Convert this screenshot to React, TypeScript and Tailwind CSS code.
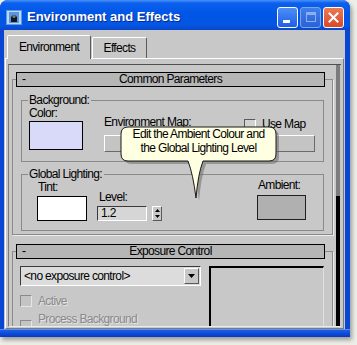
import React from 'react';

const UI = "font-['Liberation_Sans',Arial,sans-serif] text-[12px] tracking-[-0.65px] leading-[13px] text-black";

function Check({ disabled }: { disabled?: boolean }) {
  return (
    <span
      className={`block w-[12px] h-[12px] shrink-0 border ${
        disabled
          ? 'border-t-[#8a8a8a] border-l-[#8a8a8a] border-r-[#e6e6e6] border-b-[#e6e6e6] bg-[#c4c4c4]'
          : 'border-t-[#5a5a5a] border-l-[#5a5a5a] border-r-white border-b-white bg-[#d2d2d2]'
      }`}
    />
  );
}

function RolloutHeader({ title }: { title: string }) {
  return (
    <legend className="ml-[3px] w-[309px] h-[15px] p-0">
      <div className="h-full border border-black bg-[#b6b6b6] flex items-center">
        <span className="w-[16px] pl-[5px]">-</span>
        <span className="flex-1 text-center">{title}</span>
        <span className="w-[16px]" />
      </div>
    </legend>
  );
}

function Group({ label, className, children }: { label: string; className?: string; children: React.ReactNode }) {
  return (
    <fieldset className={`min-w-0 p-0 m-0 border border-[#8a8a8a] w-[303px] ml-[8px] ${className ?? ''}`}>
      <legend className="ml-[6px] pl-[1px] pr-[2px] h-[13px] bg-[#c8c8c8]">{label}</legend>
      {children}
    </fieldset>
  );
}

function Tooltip() {
  const d =
    'M12,5 H153 Q160,5 160,12 V32 Q160,39 153,39 H87 Q82,52 80,76 Q77,52 72,39 H12 Q5,39 5,32 V12 Q5,5 12,5 Z';
  return (
    <div className="absolute left-[116px] top-[122px] w-[170px] h-[84px]">
      <svg width="170" height="84" viewBox="0 0 170 84" className="block">
        <path d={d} transform="translate(3,3)" fill="#6e6e6e" opacity="0.55" />
        <path d={d} fill="#ffffe1" stroke="#1a1a1a" strokeWidth="1" />
      </svg>
      <div className={`${UI} leading-[14px] whitespace-nowrap absolute left-[5px] top-[5px] w-[155px] text-center`}>
        <div>Edit the Ambient Colour and</div>
        <div>the Global Lighting Level</div>
      </div>
    </div>
  );
}

export default function App() {
  return (
    <div className="relative w-[357px] h-[345px] bg-[#eeeee8] overflow-hidden">
      <div className="w-[350px] h-[337px] flex flex-col rounded-t-[8px] bg-[#0a46d6] shadow-[2px_3px_4px_rgba(0,0,0,0.35)] overflow-hidden">
        {/* title bar */}
        <div className="h-[30px] pt-[4px] flex items-center bg-[linear-gradient(180deg,#4a92fa_0%,#0d60ee_10%,#0056e6_45%,#0555e2_85%,#0a45c8_100%)]">
          <svg width="16" height="15" viewBox="0 0 16 15" className="ml-[6px] shrink-0">
            <rect x="0" y="0" width="16" height="15" fill="#5c9ae6" />
            <rect x="1" y="1" width="14" height="13" fill="#b8d8f6" />
            <rect x="3" y="2" width="10" height="11" fill="#5a94dc" />
            <path d="M5,12 L5,7 Q8,3 11,7 L11,12 Z" fill="#101820" />
            <circle cx="8" cy="6.5" r="1.6" fill="#6a7a88" />
          </svg>
          <span className="ml-[5px] font-['Liberation_Sans',sans-serif] font-bold text-[13px] text-white [text-shadow:1px_1px_0_#0a2a8a]">
            Environment and Effects
          </span>
          <div className="ml-auto mr-[6px] flex gap-[2px]">
            <div className="w-[21px] h-[21px] rounded-[3px] border border-white bg-[linear-gradient(180deg,#4d8ff6,#1c5fe6)] flex items-end pl-[5px] pb-[4px]">
              <div className="w-[7px] h-[3px] bg-white" />
            </div>
            <div className="w-[21px] h-[21px] rounded-[3px] border border-[#7ea4ee] bg-[linear-gradient(180deg,#3f7ee8,#2a62d8)] flex items-center justify-center">
              <div className="w-[10px] h-[10px] border border-[#8eaef0] border-t-[3px]" />
            </div>
            <div className="w-[21px] h-[21px] rounded-[3px] border border-white bg-[linear-gradient(180deg,#ec7a52,#d9482a)] flex items-center justify-center">
              <svg width="11" height="11" viewBox="0 0 11 11">
                <path d="M1.5,1.5 L9.5,9.5 M9.5,1.5 L1.5,9.5" stroke="white" strokeWidth="2" strokeLinecap="square" />
              </svg>
            </div>
          </div>
        </div>

        {/* body */}
        <div className={`${UI} ml-[4px] mr-[5px] h-[299px] bg-[#c8c8c8] flex flex-col`}>
          {/* tabs */}
          <div className="h-[28px] pl-[3px] flex items-end shrink-0">
            <div className="relative z-10 w-[84px] h-[24px] -mb-[1px] rounded-t-[2px] border-t border-l border-white border-r border-r-[#5a5a5a] bg-[#c8c8c8] flex items-center justify-center pb-[1px]">
              Environment
            </div>
            <div className="w-[55px] h-[21px] ml-[1px] rounded-t-[2px] border-t border-l border-white border-r border-r-[#5a5a5a] flex items-center justify-center">
              Effects
            </div>
          </div>

          {/* tab page */}
          <div className="flex-1 ml-[1px] mr-[1px] border-t border-l border-white border-r border-r-[#7a7a7a] border-b border-b-[#7a7a7a] flex flex-col min-h-0">
            <div className="flex-1 mt-[5px] ml-[2px] mr-[2px] mb-[1px] border-t border-l border-t-[#505050] border-l-[#7a7a7a] border-b border-b-[#eaeaea] flex min-h-0">
              <div className="flex-1 overflow-hidden pl-[3px]">
                {/* Common Parameters */}
                <fieldset className="min-w-0 m-0 p-0 mt-[7px] w-[321px] border border-[#8a8a8a] shadow-[1px_1px_0_#ececec]">
                  <RolloutHeader title="Common Parameters" />
                  <div className="pb-[3px]">
                    <Group label="Background:" className="mt-[7px]">
                      <div className="flex pl-[7px] pb-[9px]">
                        <div className="flex flex-col">
                          <span>Color:</span>
                          <div className="mt-[1px] w-[54px] h-[29px] border border-black bg-[#d9dafa]" />
                        </div>
                        <div className="ml-[21px] mt-[9px] flex flex-col">
                          <div className="flex items-start">
                            <span className="w-[140px]">Environment Map:</span>
                            <div className="mt-[2px] flex items-center">
                              <Check />
                              <span className="ml-[6px]">Use Map</span>
                            </div>
                          </div>
                          <div className="mt-[4px] w-[211px] h-[17px] border border-t-white border-l-white border-r-[#6a6a6a] border-b-[#6a6a6a] bg-[#c4c4c4]" />
                        </div>
                      </div>
                    </Group>

                    <Group label="Global Lighting:" className="mt-[6px]">
                      <div className="flex items-start pb-[9px]">
                        <div className="ml-[15px] flex flex-col">
                          <span className="pl-[1px]">Tint:</span>
                          <div className="mt-[2px] w-[50px] h-[25px] border border-black bg-white" />
                        </div>
                        <div className="ml-[10px] mt-[10px] flex flex-col">
                          <span className="pl-[2px]">Level:</span>
                          <div className="mt-[2px] flex">
                            <div className="w-[50px] h-[15px] border border-t-[#3a3a3a] border-l-[#3a3a3a] border-r-white border-b-white bg-[#d6d6d6] pl-[3px] flex items-center">
                              1.2
                            </div>
                            <div className="ml-[5px] w-[10px] h-[15px] flex flex-col border border-t-white border-l-white border-r-[#5a5a5a] border-b-[#5a5a5a]">
                              <div className="flex-1 flex items-center justify-center">
                                <svg width="5" height="3" viewBox="0 0 5 3"><path d="M2.5,0 L5,3 L0,3 Z" fill="#000" /></svg>
                              </div>
                              <div className="flex-1 flex items-center justify-center">
                                <svg width="5" height="3" viewBox="0 0 5 3"><path d="M0,0 L5,0 L2.5,3 Z" fill="#000" /></svg>
                              </div>
                            </div>
                          </div>
                        </div>
                        <div className="ml-auto mr-[17px] -mt-[2px] flex flex-col">
                          <span className="pl-[1px]">Ambient:</span>
                          <div className="mt-[3px] w-[49px] h-[25px] border border-[#202020] bg-[#b0b0b0]" />
                        </div>
                      </div>
                    </Group>
                  </div>
                </fieldset>

                {/* Exposure Control */}
                <fieldset className="min-w-0 m-0 p-0 mt-[9px] w-[321px] border border-[#8a8a8a] shadow-[1px_1px_0_#ececec]">
                  <RolloutHeader title="Exposure Control" />
                  <div className="flex items-start mt-[7px] pl-[7px]">
                    <div className="flex flex-col">
                      <div className="w-[181px] h-[20px] border border-t-[#3a3a3a] border-l-[#3a3a3a] border-r-white border-b-white bg-[#dcdcdc] flex items-center">
                        <span className="pl-[3px] flex-1">&lt;no exposure control&gt;</span>
                        <div className="w-[15px] h-[16px] mr-[1px] border border-t-white border-l-white border-r-[#5a5a5a] border-b-[#5a5a5a] bg-[#c8c8c8] flex items-center justify-center">
                          <svg width="7" height="4" viewBox="0 0 7 4"><path d="M0,0 L7,0 L3.5,4 Z" fill="#000" /></svg>
                        </div>
                      </div>
                      <div className="mt-[9px] flex items-start">
                        <Check disabled />
                        <span className="ml-[6px] text-[#8a8a8a] [text-shadow:1px_1px_0_#e4e4e4]">Active</span>
                      </div>
                      <div className="mt-[5px] flex items-start">
                        <span className="mt-[7px]"><Check disabled /></span>
                        <span className="ml-[6px] text-[#8a8a8a] [text-shadow:1px_1px_0_#e4e4e4]">Process Background</span>
                      </div>
                    </div>
                    <div className="ml-[8px] w-[115px] h-[70px] border-t-2 border-l-2 border-black border-r border-r-[#e0e0e0]" />
                  </div>
                </fieldset>
              </div>
              {/* scroll indicator */}
              <div className="w-[4px] flex flex-col shrink-0">
                <div className="h-[131px] bg-[#7c7c7c]" />
                <div className="flex-1 bg-black" />
              </div>
              <div className="w-[1px] shrink-0" />
            </div>
          </div>
        </div>
        <div className="flex-1 border-t border-t-[#5a8ef0] bg-[linear-gradient(180deg,#1a5ee8,#0638c8)] mx-0" />
      </div>
      <Tooltip />
    </div>
  );
}
